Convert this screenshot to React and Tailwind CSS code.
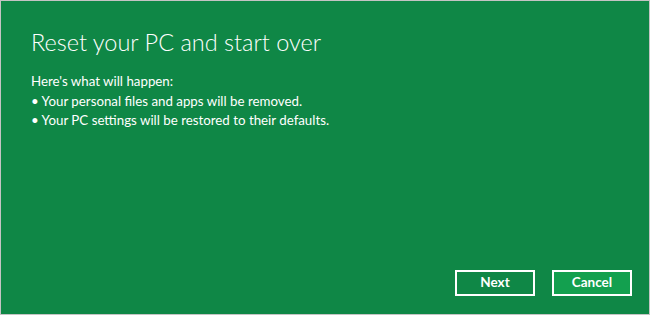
export default function App() {
  return (
    <div
      className="w-[650px] h-[315px] border border-[#c4c4c4] bg-[#0f8746] flex flex-col text-white"
      style={{ fontFamily: 'Lato, "Open Sans", sans-serif' }}
    >
      <div className="pl-[30px] pt-[26px]">
        <h1 className="text-[23.5px] font-light leading-[30px]">
          Reset your PC and start over
        </h1>
        <div className="mt-[15px] text-[13.3px] leading-[19.5px]">
          <p>Here's what will happen:</p>
          <p>• Your personal files and apps will be removed.</p>
          <p>• Your PC settings will be restored to their defaults.</p>
        </div>
      </div>

      <div className="mt-auto flex justify-end gap-[17px] pr-[17px] pb-[18px]">
        <button className="w-[80px] h-[26px] border-2 border-white bg-[#0f8746] text-[13.5px] font-bold leading-none">
          Next
        </button>
        <button className="w-[80px] h-[26px] border-2 border-white bg-[#13a04f] text-[13.5px] font-bold leading-none">
          Cancel
        </button>
      </div>
    </div>
  );
}
